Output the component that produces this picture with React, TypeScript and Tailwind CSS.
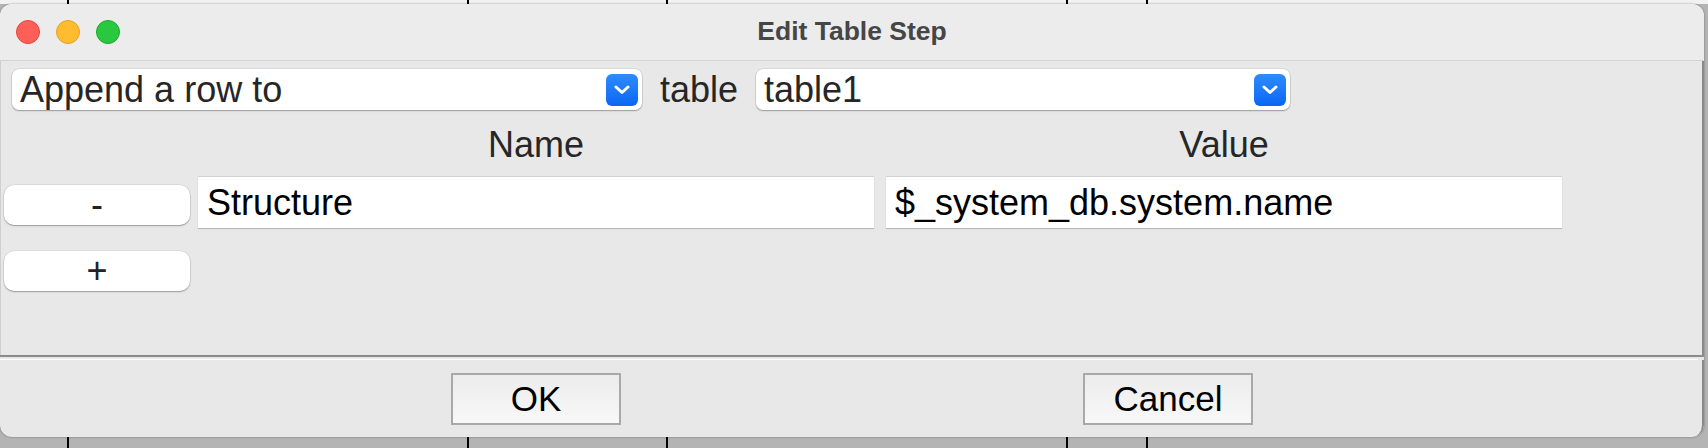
import React from 'react'

const BackdropStrip = ({ className }: { className: string }): JSX.Element => (
  <div className={`flex shrink-0 ${className}`}>
    <div className="w-[67px]" />
    <div className="w-[2px] bg-black" />
    <div className="w-[398px]" />
    <div className="w-[2px] bg-black" />
    <div className="w-[197px]" />
    <div className="w-[2px] bg-black" />
    <div className="w-[398px]" />
    <div className="w-[2px] bg-black" />
    <div className="w-[78px]" />
    <div className="w-[2px] bg-black" />
  </div>
)

const Chevron = (): JSX.Element => (
  <svg width="16" height="10" viewBox="0 0 16 10" fill="none">
    <path d="M2 2l6 5.5L14 2" stroke="white" strokeWidth="3" strokeLinecap="round" strokeLinejoin="round" />
  </svg>
)

const ComboBox = ({ value, className }: { value: string; className: string }): JSX.Element => (
  <div
    className={`flex items-center justify-between h-[41px] rounded-[7px] bg-white pl-[8px] pr-[4px] shadow-[0_1px_1.5px_rgba(0,0,0,0.3),0_0_0_0.5px_rgba(0,0,0,0.12)] ${className}`}
  >
    <span className="text-[36px] leading-[41px] text-[#262626]">{value}</span>
    <div className="flex items-center justify-center w-[32px] h-[32px] rounded-[6px] bg-gradient-to-b from-[#2f8bff] to-[#0866f2]">
      <Chevron />
    </div>
  </div>
)

const SmallButton = ({ label }: { label: string }): JSX.Element => (
  <button className="flex items-center justify-center w-[186px] h-[40px] rounded-[10px] bg-white text-[36px] leading-[40px] text-[#222] shadow-[0_1px_1.5px_rgba(0,0,0,0.3),0_0_0_0.5px_rgba(0,0,0,0.1)]">
    {label}
  </button>
)

const TextField = ({ value }: { value: string }): JSX.Element => (
  <div className="w-[676px] h-[52px] bg-white border-t border-[#d2d2d2] pl-[9px] text-[36px] leading-[51px] text-black shadow-[0_1px_1px_rgba(0,0,0,0.2)]">
    {value}
  </div>
)

const DialogButton = ({ label }: { label: string }): JSX.Element => (
  <button className="flex items-center justify-center w-[170px] h-[52px] border-2 border-[#a9a9a9] bg-gradient-to-b from-[#ececec] to-[#f8f8f8] text-[35px] leading-[46px] text-black">
    {label}
  </button>
)

export default function App(): JSX.Element {
  return (
    <div className="flex flex-col w-[1708px] h-[448px] bg-[#b4b4b4] font-['Liberation_Sans',Arial,sans-serif] overflow-hidden">
      <BackdropStrip className="h-[4px] bg-[#f2f2f2]" />

      <div className="flex flex-col w-[1704px] h-[433px] shrink-0 rounded-[12px] overflow-hidden bg-[#e8e8e8] shadow-[0_0_2px_rgba(0,0,0,0.45)]">
        {/* title bar */}
        <div className="relative flex items-center h-[57px] shrink-0 bg-[#ececec] border-b border-[#d3d3d3] pl-[16px] gap-[16px]">
          <div className="w-[24px] h-[24px] rounded-full bg-[#ff5f57] border border-[#e2463f]" />
          <div className="w-[24px] h-[24px] rounded-full bg-[#febc2e] border border-[#e1a325]" />
          <div className="w-[24px] h-[24px] rounded-full bg-[#28c840] border border-[#1aab29]" />
          <div className="absolute inset-0 flex items-center justify-center text-[26.5px] font-bold text-[#464646] pointer-events-none">
            Edit Table Step
          </div>
        </div>

        {/* content */}
        <div className="flex flex-col h-[294px] shrink-0 border-r-2 border-[#8a8a8a] border-l border-l-[#cfcfcf]">
          <div className="flex items-center mt-[8px] pl-[11px]">
            <ComboBox value="Append a row to" className="w-[630px]" />
            <span className="ml-[18px] w-[96px] text-[36px] leading-[41px] text-[#262626]">table</span>
            <ComboBox value="table1" className="w-[534px]" />
          </div>

          <div className="flex mt-[17px] pl-[197px] gap-[12px] h-[36px]">
            <div className="w-[676px] text-center text-[36px] leading-[36px] text-[#262626]">Name</div>
            <div className="w-[676px] text-center text-[36px] leading-[36px] text-[#262626]">Value</div>
          </div>

          <div className="flex items-start mt-[13px] pl-[3px]">
            <div className="mt-[9px]">
              <SmallButton label="-" />
            </div>
            <div className="flex ml-[8px] gap-[12px]">
              <TextField value="Structure" />
              <TextField value="$_system_db.system.name" />
            </div>
          </div>

          <div className="flex mt-[23px] pl-[3px]">
            <SmallButton label="+" />
          </div>
        </div>

        {/* separator */}
        <div className="h-[2px] shrink-0 bg-[#8a8a8a]" />
        <div className="h-[2px] shrink-0" />
        <div className="h-[1px] shrink-0 bg-white mr-[6px]" />

        {/* buttons */}
        <div className="flex flex-1 pt-[13px] pl-[451px] gap-[462px] border-r-2 border-[#8a8a8a] rounded-br-[12px]">
          <DialogButton label="OK" />
          <DialogButton label="Cancel" />
        </div>
      </div>

      <BackdropStrip className="flex-1" />
    </div>
  )
}
